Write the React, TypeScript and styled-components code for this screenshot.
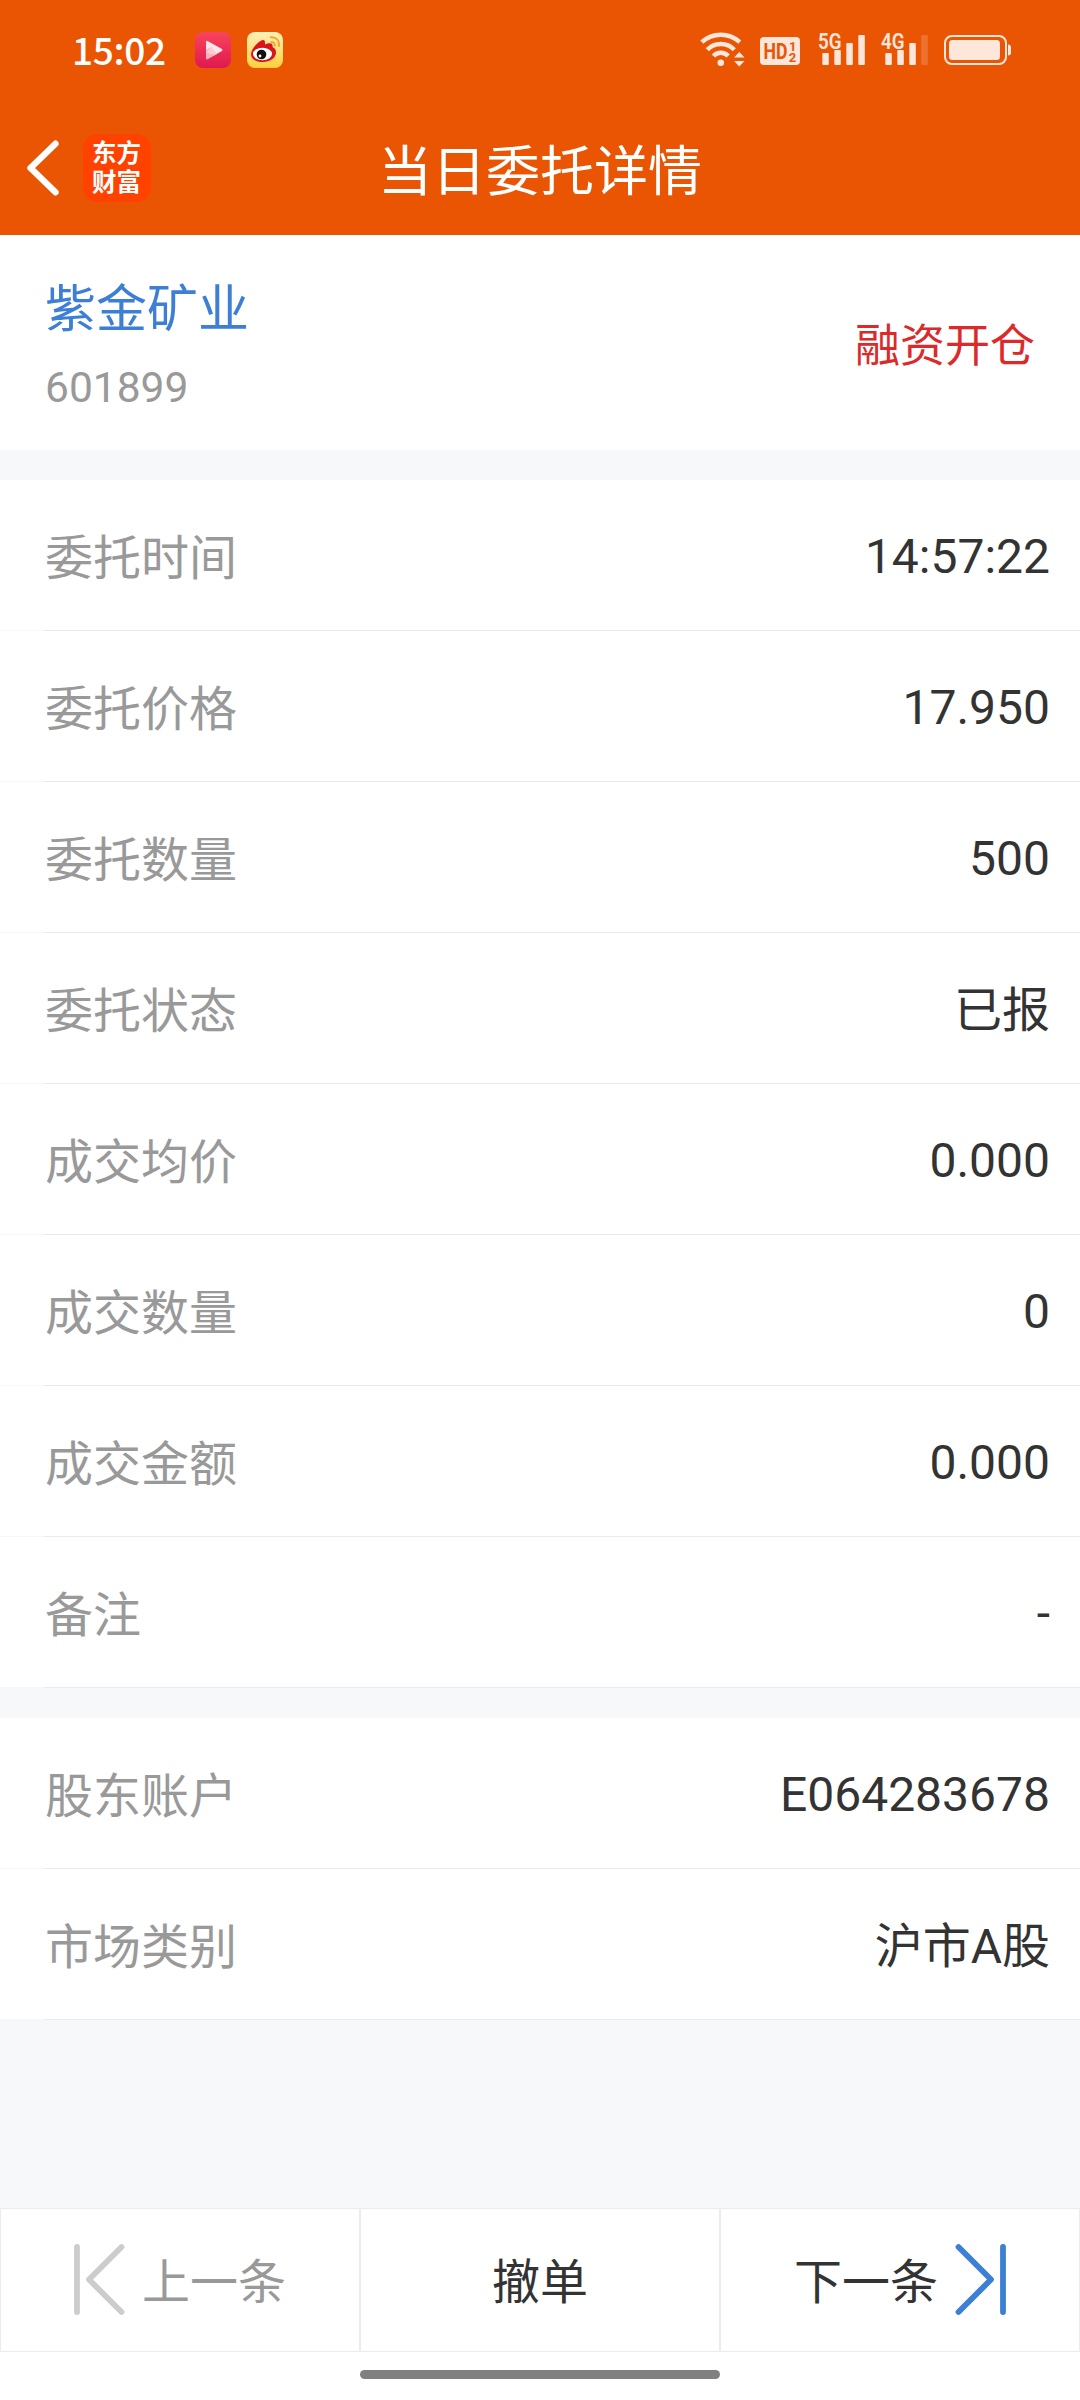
import React from "react";
import styled, { createGlobalStyle } from "styled-components";

const Global = createGlobalStyle`
  * { box-sizing: border-box; }
  body {
    margin: 0;
    background: #f6f8fa;
    font-family: Roboto, "Noto Sans CJK SC", sans-serif;
    font-weight: 400;
    color: #333;
  }
  svg { overflow: visible; flex: none; }
`;

const Screen = styled.div`
  width: 1080px;
  height: 2400px;
  display: flex;
  flex-direction: column;
  background: #f6f8fa;
  overflow: hidden;
`;

const Header = styled.header`
  height: 235px;
  background: #ea5504;
  color: #fff;
`;

const StatusBar = styled.div`
  height: 100px;
  display: flex;
  justify-content: space-between;
  align-items: center;
  padding: 0 69px 0 72px;
`;

const StatusGroup = styled.div`
  display: flex;
  align-items: center;
  gap: 16px;
`;

const Clock = styled.span`
  width: 107px;
  padding-bottom: 2px;
  font: 500 37px/44px "Noto Sans CJK SC", sans-serif;
  letter-spacing: -0.3px;
  white-space: nowrap;
`;

const TitleBar = styled.div`
  height: 135px;
  display: grid;
  grid-template-columns: 270px 1fr 270px;
  align-items: center;
`;

const NavLeft = styled.div`
  display: flex;
  align-items: center;
  gap: 23px;
  padding-left: 26px;
`;

const BrandLogo = styled.div`
  width: 68px;
  height: 68px;
  border-radius: 14px;
  background: #ff4200;
  padding: 3px 0 0 9px;
  font: 700 24.5px/29px "Noto Sans CJK SC", sans-serif;
  white-space: nowrap;
`;

const Title = styled.h1`
  margin: 0;
  padding-top: 11px;
  text-align: center;
  font-size: 54px;
  font-weight: 400;
  line-height: 80px;
  white-space: nowrap;
`;

const StockCard = styled.section`
  height: 215px;
  background: #fff;
  display: flex;
  justify-content: space-between;
  padding: 0 45px;
`;

const StockInfo = styled.div`
  display: flex;
  flex-direction: column;
  padding-top: 38px;
`;

const StockName = styled.div`
  font-size: 51px;
  line-height: 74px;
  color: #3c7fd5;
`;

const StockCode = styled.div`
  font-size: 42.5px;
  line-height: 50px;
  margin-top: 16px;
  color: #999;
`;

const TradeType = styled.div`
  align-self: center;
  padding-top: 9px;
  font-size: 45px;
  line-height: 66px;
  color: #dc2a2a;
`;

const Section = styled.section`
  margin-top: 30px;
  background: #fff;
`;

const Row = styled.div`
  height: 151px;
  display: flex;
  align-items: center;
  justify-content: space-between;
  padding: 0 30px 0 45px;
  border-bottom: 1px solid;
  border-image: linear-gradient(to right, #f8f8f8 45px, #ebebeb 45px) 1;
  font-size: 48px;
  line-height: 70px;
`;

const Label = styled.span`
  padding-top: 7px;
  color: #999;
`;

const Value = styled.span<{ $hanzi: boolean }>`
  padding-top: ${(p) => (p.$hanzi ? 6 : 4)}px;
  color: #333;
`;

const Footer = styled.footer`
  margin-top: auto;
  height: 192px;
  background: #fff;
`;

const Actions = styled.div`
  display: grid;
  grid-template-columns: repeat(3, 1fr);
`;

const Action = styled.button<{ $muted?: boolean }>`
  height: 144px;
  display: flex;
  align-items: center;
  justify-content: center;
  gap: 18px;
  padding: 0 0 1px;
  border: 1px solid #ececec;
  background: #fff;
  font: 400 48px/70px Roboto, "Noto Sans CJK SC", sans-serif;
  color: ${(p) => (p.$muted ? "#999" : "#333")};
`;

const ActionText = styled.span`
  padding-top: 7px;
`;

const HomeBar = styled.div`
  width: 360px;
  height: 9px;
  margin: 18px auto 0;
  border-radius: 5px;
  background: #808080;
`;

const BackIcon = () => (
  <svg width="34" height="56" viewBox="0 0 34 56" fill="none" stroke="#fff" strokeWidth="6.4" strokeLinecap="round" strokeLinejoin="round">
    <path d="M29.500 3.700 4.500 28l25 24.300" />
  </svg>
);

const VideoIcon = () => (
  <svg width="36" height="36" viewBox="0 0 36 36">
    <defs>
      <linearGradient id="video" x1="0" y1="0" x2="0" y2="1">
        <stop offset="0" stopColor="#f8455c" />
        <stop offset="1" stopColor="#e01850" />
      </linearGradient>
    </defs>
    <rect width="36" height="36" rx="8" fill="url(#video)" />
    <path d="M11 10v16q0 2 1.600 1L27 19q1-1 0-2L12.600 9Q11 8 11 10Z" fill="#fde4e8" />
    <path d="M11 18v8q0 2 1.600 1L20 23l-4-8Z" fill="#fbb0bd" />
    <path d="M11 20.500 16 15l6 7-2 1Z" fill="#fccad2" />
  </svg>
);

const WeiboIcon = () => (
  <svg width="36" height="36" viewBox="0 0 36 36">
    <defs>
      <linearGradient id="weibo" x1="0" y1="0" x2="0" y2="1">
        <stop offset="0" stopColor="#fff0b8" />
        <stop offset="1" stopColor="#ffd03c" />
      </linearGradient>
    </defs>
    <rect width="36" height="36" rx="8" fill="url(#weibo)" />
    <path d="M4 22.500c0-5.500 8-14 12-14.500 2.500 0 2 3 2 4.500 4-2 8.500-2 7.500 2.500 2.500 1 3.500 3 3.500 5.500C29 26 23 30 16 30S4 27 4 22.500Z" fill="#d8141c" />
    <ellipse cx="15.500" cy="22" rx="9.500" ry="6.200" fill="#fff" />
    <circle cx="14.500" cy="22.500" r="4.800" fill="#111" />
    <circle cx="13" cy="24" r="1.400" fill="#fff" />
    <path d="M23 5.300c6-1 10 3.500 8.800 9.500M23.500 10c3-.5 5 1.500 4.300 4.500" fill="none" stroke="#eeaa30" strokeWidth="2" />
  </svg>
);

const TINT = "#fde6da";

const WifiIcon = () => (
  <svg width="44" height="34" viewBox="0 0 44 34">
    <g fill="none" stroke={TINT} strokeWidth="4.5">
      <path d="M1.800 9.200a28 28 0 0 1 38 0" />
      <path d="M7.300 16.700a18.700 18.700 0 0 1 27 0" />
      <path d="M13.400 23a10 10 0 0 1 14.800 0" />
    </g>
    <circle cx="20.800" cy="29.700" r="3.300" fill={TINT} />
    <path d="m39.300 19 5.200 5.500H34.100ZM39.300 33.500 44.500 28H34.100Z" fill={TINT} />
  </svg>
);

const HdIcon = () => (
  <svg width="42" height="30" viewBox="0 -2 42 30">
    <rect width="40" height="28" rx="4" fill={TINT} />
    <g fill="#ea5504" fontFamily="Roboto" fontWeight="700">
      <text x="3.500" y="22.300" fontSize="22.5" textLength="24" lengthAdjust="spacingAndGlyphs">HD</text>
      <text x="29" y="13.500" fontSize="13">1</text>
      <text x="28.800" y="24.700" fontSize="13">2</text>
    </g>
  </svg>
);

const SignalIcon = ({ label, weak }: { label: string; weak?: boolean }) => (
  <svg width="47" height="34" viewBox="0 0 47 34" fill={TINT}>
    <text x="0" y="16" fontSize="22" fontFamily="Roboto" fontWeight="600" textLength="23.5" lengthAdjust="spacingAndGlyphs">
      {label}
    </text>
    <rect x="4.300" y="20" width="6.500" height="12" rx="1" />
    <rect x="16.300" y="17" width="6.500" height="15" rx="1" />
    <rect x="28.300" y="10" width="6.500" height="22" rx="1" />
    <rect x="40.300" y="2" width="6.500" height="30" rx="1" opacity={weak ? 0.2 : 1} />
  </svg>
);

const BatteryIcon = () => (
  <svg width="67" height="30" viewBox="0 0 67 30">
    <rect x="1" y="1" width="61" height="28" rx="7" fill="none" stroke={TINT} strokeWidth="2" />
    <rect x="5" y="5" width="51" height="20" rx="3.500" fill={TINT} />
    <path d="M64 9.500q3 .5 3 2.500v6q0 2-3 2.500Z" fill={TINT} />
  </svg>
);

const StepIcon = ({ color, forward }: { color: string; forward?: boolean }) => (
  <svg width="50" height="71" viewBox="0 0 50 71" fill="none" stroke={color} strokeWidth="5.800" strokeLinecap="round" strokeLinejoin="round">
    <g transform={forward ? "matrix(-1 0 0 1 50 0)" : undefined}>
      <path d="M3 3v65M47.500 3 15 35.500 47.500 68" />
    </g>
  </svg>
);

type Entry = [label: string, value: string];

const orderRows: Entry[] = [
  ["委托时间", "14:57:22"],
  ["委托价格", "17.950"],
  ["委托数量", "500"],
  ["委托状态", "已报"],
  ["成交均价", "0.000"],
  ["成交数量", "0"],
  ["成交金额", "0.000"],
  ["备注", "-"],
];

const accountRows: Entry[] = [
  ["股东账户", "E064283678"],
  ["市场类别", "沪市A股"],
];

const hasHanzi = (text: string) => /[\u4e00-\u9fff]/.test(text);

const DetailList = ({ rows }: { rows: Entry[] }) => (
  <Section>
    {rows.map(([label, value]) => (
      <Row key={label}>
        <Label>{label}</Label>
        <Value $hanzi={hasHanzi(value)}>{value}</Value>
      </Row>
    ))}
  </Section>
);

export default function App() {
  return (
    <>
      <Global />
      <Screen>
        <Header>
          <StatusBar>
            <StatusGroup>
              <Clock>15:02</Clock>
              <VideoIcon />
              <WeiboIcon />
            </StatusGroup>
            <StatusGroup>
              <WifiIcon />
              <HdIcon />
              <SignalIcon label="5G" />
              <SignalIcon label="4G" weak />
              <BatteryIcon />
            </StatusGroup>
          </StatusBar>
          <TitleBar>
            <NavLeft>
              <BackIcon />
              <BrandLogo>
                东方
                <br />
                财富
              </BrandLogo>
            </NavLeft>
            <Title>当日委托详情</Title>
          </TitleBar>
        </Header>
        <StockCard>
          <StockInfo>
            <StockName>紫金矿业</StockName>
            <StockCode>601899</StockCode>
          </StockInfo>
          <TradeType>融资开仓</TradeType>
        </StockCard>
        <DetailList rows={orderRows} />
        <DetailList rows={accountRows} />
        <Footer>
          <Actions>
            <Action $muted>
              <StepIcon color="#ccc" />
              <ActionText>上一条</ActionText>
            </Action>
            <Action>
              <ActionText>撤单</ActionText>
            </Action>
            <Action>
              <ActionText>下一条</ActionText>
              <StepIcon color="#3c7fd5" forward />
            </Action>
          </Actions>
          <HomeBar />
        </Footer>
      </Screen>
    </>
  );
}
